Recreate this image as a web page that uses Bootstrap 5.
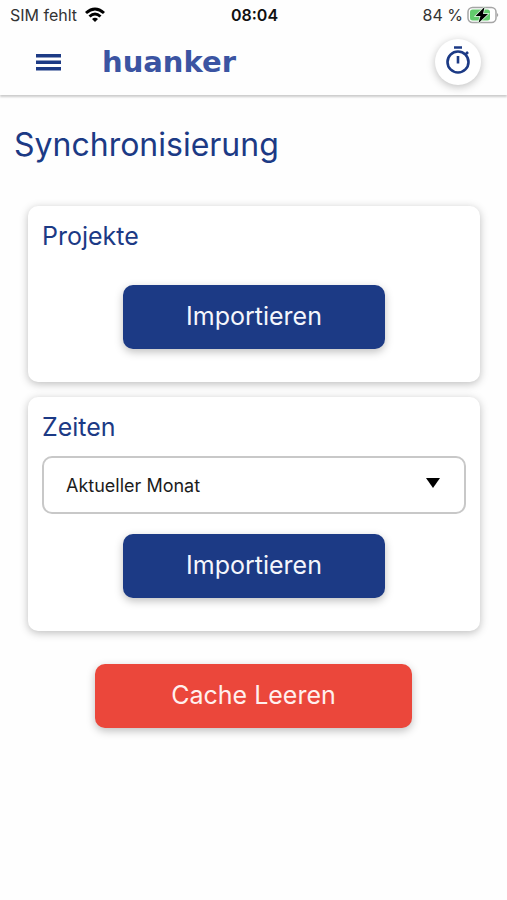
<!DOCTYPE html>
<html lang="de">
<head>
<meta charset="utf-8">
<meta name="viewport" content="width=device-width, initial-scale=1">
<title>Synchronisierung</title>
<link href="https://cdn.jsdelivr.net/npm/bootstrap@5.3.0/dist/css/bootstrap.min.css" rel="stylesheet">
<style>
  :root { --brand: #1c3a85; --clear: #eb473b; }
  body { font-family: Inter, "Liberation Sans", sans-serif; color: #1c1c1c; background: #fefefe; }
  .status { height: 29px; font-size: 16px; line-height: 30px; padding: 0 8px 0 10px; color: #333; }
  .clock { font-weight: 600; color: #111; }
  .topbar { height: 66px; padding: 0 26px 0 35px; box-shadow: 0 2px 2px rgba(0,0,0,.2); }
  .menu-btn, .timer-btn { color: var(--brand); }
  .brand-link { margin-left: 41px; font: 700 29px/40px "DejaVu Sans", sans-serif; color: #3b54a2; }
  .timer-btn { width: 46px; height: 46px; box-shadow: 0 2px 8px rgba(0,0,0,.25); }
  .page-title { font-size: 32px; line-height: 40px; color: var(--brand); padding: 30px 14px 0; margin-bottom: 41px; }
  .panels { padding: 0 27px 0 28px; gap: 15px; }
  .panel { border-radius: 10px; padding: 12px 14px 33px; box-shadow: 0 2px 8px rgba(0,0,0,.26); }
  .panel-title { font-size: 25px; line-height: 36px; color: var(--brand); margin-bottom: 11px; }
  .panel-title.spaced { margin-bottom: 31px; }
  .action { height: 64px; border-radius: 10px; font-size: 25px; box-shadow: 0 3px 8px rgba(0,0,0,.25); }
  .action-import { width: 62%; }
  .action-import, .action-import:hover { background: var(--brand); color: #f4f6fc; }
  .action-clear, .action-clear:hover { background: var(--clear); color: #fff0ee; }
  .period { height: 58px; border: 2px solid #c8c8c8; border-radius: 10px; padding: 0 60px 0 22px; margin-bottom: 20px; font-size: 18px; color: #1c1c1c;
    background-color: #fff; background-size: 14px 10px; background-position: right 24px top 20px;
    background-image: url("data:image/svg+xml,%3Csvg xmlns='http://www.w3.org/2000/svg' viewBox='0 0 14 10'%3E%3Cpath d='M0 0h14L7 10z'/%3E%3C/svg%3E"); }
  .clear-row { padding: 33px 15px 48px; }
</style>
</head>
<body>
<div class="status row g-0">
  <div class="col d-flex align-items-center">
    <span>SIM fehlt</span>
    <svg class="ms-2" width="20" height="16" viewBox="0 0 20 16" fill="none" stroke="#000" stroke-width="3" aria-label="WLAN" role="img">
      <path d="M1 6Q10-2 19 6M4.500 9.500Q10 4.500 15.500 9.500"/><path d="M7 12Q10 9.500 13 12L10 15z" fill="#000" stroke="none"/>
    </svg>
  </div>
  <div class="col-auto clock">08:04</div>
  <div class="col d-flex align-items-center justify-content-end gap-1">
    <span>84 %</span>
    <svg width="32" height="18" viewBox="0 0 32 18" aria-label="Akku lädt" role="img">
      <rect x="1" y="1.500" width="28" height="15" rx="4.500" fill="#fff" stroke="#a5a5a5" stroke-width="1.500"/>
      <rect x="3" y="3.500" width="20" height="11" rx="2.500" fill="#62cb6c"/>
      <path d="M30 7q2.500 2 0 4z" fill="#a5a5a5"/>
      <path d="M17.500 1L8.500 10h5L11.500 17L21 8h-5z" fill="#000" stroke="#e4f6e6" stroke-width="1.500" paint-order="stroke"/>
    </svg>
  </div>
</div>

<nav class="topbar navbar flex-nowrap justify-content-start">
  <button class="menu-btn btn p-0 border-0 d-flex" type="button" aria-label="Menü">
    <svg width="26" height="18" viewBox="0 0 26 18" fill="currentColor"><path d="M1 1h25v3.500H1zM1 7.500h25v3.500H1zM1 14h25v3.500H1z"/></svg>
  </button>
  <a class="brand-link me-auto text-decoration-none" href="#">huanker</a>
  <button class="timer-btn btn p-0 pb-1 border-0 rounded-circle bg-white d-flex align-items-center justify-content-center" type="button" aria-label="Zeiterfassung">
    <svg width="28" height="30" viewBox="0 0 28 30" fill="none" stroke="currentColor" stroke-width="2.600">
      <circle cx="14" cy="17" r="10.500"/><path d="M10 2.500h8M14 11v7.500M21.500 9.500l2.500-2.500"/>
    </svg>
  </button>
</nav>

<main>
  <h1 class="page-title fw-normal">Synchronisierung</h1>
  <div class="panels d-flex flex-column">
    <section class="panel card border-0">
      <h2 class="panel-title spaced fw-normal">Projekte</h2>
      <button class="action action-import btn border-0 mx-auto" type="button">Importieren</button>
    </section>
    <section class="panel card border-0">
      <label class="panel-title" for="period">Zeiten</label>
      <select class="period form-select" id="period"><option>Aktueller Monat</option></select>
      <button class="action action-import btn border-0 mx-auto" type="button">Importieren</button>
    </section>
  </div>
  <div class="clear-row row g-0 justify-content-center">
    <button class="action action-clear btn border-0 col-8" type="button">Cache Leeren</button>
  </div>
</main>
<script src="https://cdn.jsdelivr.net/npm/bootstrap@5.3.0/dist/js/bootstrap.bundle.min.js"></script>
</body>
</html>
